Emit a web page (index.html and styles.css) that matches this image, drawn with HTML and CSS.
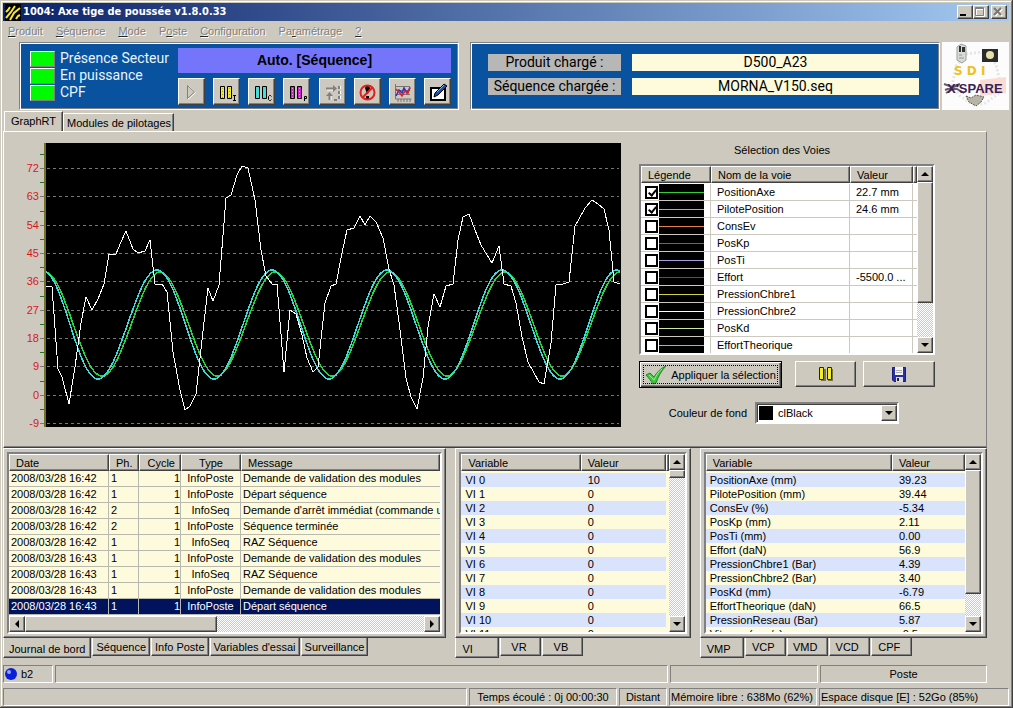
FILE: index.html
```html
<!DOCTYPE html>
<html lang="fr">
<head>
  <meta charset="UTF-8" />
  <meta name="viewport" content="width=device-width, initial-scale=1.0" />
  <title>1004: Axe tige de poussée v1.8.0.33</title>
  <link rel="stylesheet" href="styles.css">
</head>
<body>
<div class="window">

  <!-- title bar -->
  <header class="titlebar">
    <svg class="app-icon" width="16" height="17" viewBox="0 0 16 17">
      <rect width="16" height="17" fill="#000"/>
      <path d="M1 8L3 6 5 3M1 14L6 8 10 2M5 16L9 9 15 4M11 15L13 12 15 11" stroke="#f5e62a" stroke-width="2" fill="none"/>
    </svg>
    <h1>1004: Axe tige de poussée v1.8.0.33</h1>
    <button class="win-btn" aria-label="Réduire"><svg width="12" height="10"><path d="M2 8h6" stroke="#000" stroke-width="2"/></svg></button>
    <button class="win-btn" aria-label="Agrandir"><svg width="12" height="10"><path d="M2.500 1.500h8v8h-8zM2 2.500h9" stroke="#fff" fill="none"/><path d="M1.500 .5h8v8h-8zM1 1.500h9" stroke="#808080" fill="none"/></svg></button>
    <button class="win-btn close" aria-label="Fermer"><svg width="12" height="10"><path d="M3 2l7 7M10 2l-7 7" stroke="#fff" stroke-width="2"/><path d="M2 1l7 7M9 1l-7 7" stroke="#777" stroke-width="2"/></svg></button>
  </header>

  <nav class="menu">
    <a href="#"><u>P</u>roduit</a>
    <a href="#"><u>S</u>équence</a>
    <a href="#"><u>M</u>ode</a>
    <a href="#">P<u>o</u>ste</a>
    <a href="#"><u>C</u>onfiguration</a>
    <a href="#">Pa<u>r</u>amétrage</a>
    <a href="#"><u>?</u></a>
  </nav>

  <!-- state + toolbar -->
  <section class="top">
    <div class="blue state">
      <ul class="leds">
        <li>Présence Secteur</li>
        <li>En puissance</li>
        <li>CPF</li>
      </ul>
      <div class="control">
        <div class="banner">Auto. [Séquence]</div>
        <div class="toolbar">
          <button aria-label="Démarrer"><svg width="24" height="24"><path d="M9.500 6v13l7-6.500z" fill="none" stroke="#fff"/><path d="M8.500 5.500v13l7-6.500z" fill="#cdc9be" stroke="#808080"/></svg></button>
          <button aria-label="Pause immédiate"><svg width="24" height="24"><path d="M6.500 6.500h4v12h-4zM13.500 6.500h4v12h-4z" fill="#f2ec25" stroke="#000"/><path d="M8.500 8v10M15.500 8v10" stroke="#a9a422" stroke-dasharray="1 2"/><path d="M19 15.500h3M20.500 15.500v5M19 20.500h3" stroke="#000" fill="none"/></svg></button>
          <button aria-label="Pause cycle"><svg width="24" height="24"><path d="M6.500 6.500h4v12h-4zM13.500 6.500h4v12h-4z" fill="#3fe0dc" stroke="#000"/><path d="M22.500 16.500l-1-1h-1l-1 1v3l1 1h1l1-1" stroke="#000" fill="none"/></svg></button>
          <button aria-label="Pause phase"><svg width="24" height="24"><path d="M6.500 6.500h4v12h-4zM13.500 6.500h4v12h-4z" fill="#d41fd0" stroke="#000"/><path d="M8.500 8v10M15.500 8v10" stroke="#f59af0" stroke-dasharray="1 2"/><path d="M20.500 21v-4.500h2v2h-2" stroke="#000" fill="none"/></svg></button>
          <button aria-label="Pas à pas"><svg width="24" height="24"><path d="M7 9.500h6M10.500 15v5" stroke="#fff" stroke-width="2"/><path d="M20 6v15" stroke="#fff" stroke-width="2" stroke-dasharray="3 2"/><path d="M6 8.500h7M9.500 15v5" stroke="#808080" stroke-width="2"/><path d="M19 6v15M14 20h5" stroke="#808080" stroke-width="2" stroke-dasharray="3 2"/><path d="M13 5l4 3.500-4 3.500zM6 16l3.500-4 3.500 4z" fill="#808080"/></svg></button>
          <button aria-label="Arrêt"><svg width="24" height="24"><path d="M11 6h3l1 2-2 6h-1l-2-6z" fill="#000"/><path d="M11 16h3v3h-3z" fill="#000"/><circle cx="12.500" cy="12.500" r="7" fill="none" stroke="#e2201c" stroke-width="2"/><path d="M8 17l9-9" stroke="#e2201c" stroke-width="2"/></svg></button>
          <button aria-label="Courbes"><svg width="24" height="24"><path d="M5.500 4v15h16M5 6.500h15M5 10.500h15M5 14.500h15" fill="none" stroke="#777"/><path d="M8 19v3M11 19v3M14 19v3M17 19v3M20 19v3" stroke="#777"/><path d="M6 16l3-6 3 3 2-5 3 5 3-5" fill="none" stroke="#2233cc" stroke-width="1.500"/><path d="M6 9l3 3 3 4 3-5 3 2 2-6" fill="none" stroke="#d9232b" stroke-width="1.500"/></svg></button>
          <button aria-label="Éditer"><svg width="24" height="24"><path d="M6 8h14v12H6z" fill="#fff" stroke="#000" stroke-width="2"/><path d="M9 17l1-4 9-9 3 2-9 9z" fill="#1650b0" stroke="#000"/><path d="M12 12l7-7" stroke="#7fb2ee"/></svg></button>
        </div>
      </div>
    </div>

    <dl class="blue loaded">
      <dt>Produit chargé :</dt><dd>D500_A23</dd>
      <dt>Séquence chargée :</dt><dd>MORNA_V150.seq</dd>
    </dl>

    <svg class="logo" width="67" height="68" viewBox="0 0 67 68">
      <rect width="67" height="68" fill="#fcfcfc"/>
      <path d="M10 44L14 24 24 12 40 10 54 22 58 40 56 52 42 62 30 62 18 54z" fill="none" stroke="#e6e6e6" stroke-width="3" stroke-dasharray="2 2"/>
      <path d="M15 5l4-3 5 2v14l-4 3-5-3z" fill="#d8dcd6" stroke="#9aa098"/>
      <path d="M17 4h2v6h-2zM20 5h3v5h-3z" fill="#333"/>
      <path d="M17 13h3M17 16h5" stroke="#8c9a88"/>
      <rect x="40" y="7" width="16" height="13" fill="#2a2a2a"/>
      <circle cx="48" cy="13" r="4" fill="#e8dfa9"/>
      <text x="12" y="33" class="logo-sdi">S D I</text>
      <path d="M38 38l26-3v16l-26 3z" fill="#f9dcd3"/>
      <path d="M2 42l8 3 8-3M3 48l14-5M4 51l9-5 9 5" stroke="#6a5c68" stroke-width="2" fill="none"/>
      <text x="5" y="51" class="logo-name">X'SPARE</text>
      <path d="M24 54l5 2 5-3 8 2-3 5-5 4-7-4z" fill="#b9b5a6" stroke="#5a574e" stroke-dasharray="2 1"/>
    </svg>
  </section>

  <main class="main">
    <div class="tabs upper" role="tablist">
      <button class="tab active" role="tab">GraphRT</button>
      <button class="tab" role="tab">Modules de pilotages</button>
    </div>

    <section class="page">
      <svg class="chart" viewBox="20 143 601 284">
        <g class="labels">
          <text x="39" y="172">72</text>
          <text x="39" y="200">63</text>
          <text x="39" y="229">54</text>
          <text x="39" y="257">45</text>
          <text x="39" y="285">36</text>
          <text x="39" y="314">27</text>
          <text x="39" y="342">18</text>
          <text x="39" y="370">9</text>
          <text x="39" y="399">0</text>
          <text x="39" y="427">-9</text>
        </g>
        <path d="M40 168.500h4M40 196.500h4M40 225.500h4M40 253.500h4M40 281.500h4M40 310.500h4M40 338.500h4M40 366.500h4M40 395.500h4M40 423.500h4" stroke="#777"/>
        <path d="M40 154.500h4M40 182.500h4M40 211.500h4M40 239.500h4M40 267.500h4M40 296.500h4M40 324.500h4M40 352.500h4M40 381.500h4M40 409.500h4" stroke="#1c7a1c"/>
        <rect x="44" y="143" width="2" height="284" fill="#74741c"/>
        <!-- plot area, clips the curves -->
        <svg x="46" y="143" width="575" height="284" viewBox="46 143 575 284">
          <rect x="46" y="143" width="575" height="284" fill="#000"/>
          <path class="grid" d="M47 168.500H619M47 196.500H619M47 225.500H619M47 253.500H619M47 281.500H619M47 310.500H619M47 338.500H619M47 366.500H619M47 395.500H619M47 423.500H619"/>
          <path class="curve wave" stroke="#22d83a" d="M45 272C65 272 81 376 102 376S140 272 160 272 197 376 217 376 255 272 275 272 312 376 332 376 370 272 390 272 427 376 447 376 485 272 505 272 542 376 562 376 600 272 620 272"/>
          <path class="curve wave" stroke="#3fd8dc" d="M42 270C63 270 77 379 98 379S136 270 157 270 193 379 214 379 251 270 272 270 308 379 329 379 366 270 387 270 424 379 445 379 481 270 502 270 539 379 560 379 596 270 617 270L620 271"/>
          <polyline class="curve" stroke="#fff" points="46,286 52,287 58,369 62,377 69,404 75,367 81,323 86,297 92,310 98,299 104,284 109,254 116,254 121,242 126,231 133,249 138,253 145,251 150,240 155,284 162,284 167,292 173,352 180,390 185,410 190,406 196,394 202,340 208,288 213,301 219,285 226,198 231,195 237,175 242,166 248,168 255,200 261,250 266,276 272,284 277,284 284,372 290,310 296,314 302,335 307,358 313,372 318,367 325,303 331,286 336,284 342,253 347,230 354,228 360,216 365,225 370,216 376,222 383,238 389,269 394,285 399,322 406,378 411,397 417,409 423,378 428,327 434,294 440,307 446,286 453,284 458,240 463,217 469,214 475,230 481,245 487,255 492,263 499,246 504,284 511,286 516,303 522,337 528,362 534,373 539,382 544,384 551,343 556,285 563,284 569,282 575,226 579,219 585,208 592,200 598,204 604,209 609,230 614,282 620,284"/>
        </svg>
      </svg>

      <div class="channels">
        <h2>Sélection des Voies</h2>
        <div class="list channel-list">
          <div class="view">
            <table class="voies">
              <colgroup><col class="w70"><col><col class="w63"><col class="w4"></colgroup>
              <thead><tr><th>Légende</th><th>Nom de la voie</th><th>Valeur</th><th></th></tr></thead>
              <tbody>
                <tr><td><input type="checkbox" aria-label="PositionAxe" checked><i class="line c1"></i></td><td>PositionAxe</td><td>22.7 mm</td><td></td></tr>
                <tr><td><input type="checkbox" aria-label="PilotePosition" checked><i class="line c2"></i></td><td>PilotePosition</td><td>24.6 mm</td><td></td></tr>
                <tr><td><input type="checkbox" aria-label="ConsEv"><i class="line c3"></i></td><td>ConsEv</td><td></td><td></td></tr>
                <tr><td><input type="checkbox" aria-label="PosKp"><i class="line c4"></i></td><td>PosKp</td><td></td><td></td></tr>
                <tr><td><input type="checkbox" aria-label="PosTi"><i class="line c5"></i></td><td>PosTi</td><td></td><td></td></tr>
                <tr><td><input type="checkbox" aria-label="Effort"><i class="line c6"></i></td><td>Effort</td><td>-5500.0 ...</td><td></td></tr>
                <tr><td><input type="checkbox" aria-label="PressionChbre1"><i class="line c7"></i></td><td>PressionChbre1</td><td></td><td></td></tr>
                <tr><td><input type="checkbox" aria-label="PressionChbre2"><i class="line c8"></i></td><td>PressionChbre2</td><td></td><td></td></tr>
                <tr><td><input type="checkbox" aria-label="PosKd"><i class="line c9"></i></td><td>PosKd</td><td></td><td></td></tr>
                <tr><td><input type="checkbox" aria-label="EffortTheorique"><i class="line c2"></i></td><td>EffortTheorique</td><td></td><td></td></tr>
              </tbody>
            </table>
          </div>
          <div class="vscroll">
            <button class="arrow up" aria-label="Haut"></button>
            <div class="thumb long"></div>
            <button class="arrow down" aria-label="Bas"></button>
          </div>
        </div>

        <div class="actions">
          <button class="apply">
            <svg width="22" height="20" viewBox="0 0 22 20"><path d="M1 10l4-2 4 4C12 7 16 3 21 1 16 6 13 12 11 18l-3 1C6 16 4 13 1 10z" fill="#3cc63c" stroke="#1f8a26"/><path d="M4 10l5 5C12 9 14 6 17 4" fill="none" stroke="#9af08a"/></svg>
            <span>Appliquer la sélection</span>
          </button>
          <button class="pause" aria-label="Pause"><svg width="14" height="16"><path d="M2 3h5v12H2zM9 3h5v12H9z" fill="#77745a"/><path d="M.5 1.500h4v12h-4zM8.500 1.500h4v12h-4z" fill="#f4ee22" stroke="#222"/></svg></button>
          <button class="save" aria-label="Enregistrer"><svg width="14" height="15" viewBox="0 0 14 15"><path d="M.5.5h13v14H2L.5 13z" fill="#2a2ea8" stroke="#1b1d78"/><path d="M3 0h8v8H3z" fill="#f2f2f2"/><path d="M4 3.500h6M4 5.500h6" stroke="#aaa"/><path d="M4 10h7v5H4z" fill="#ddd"/><path d="M5 11h2v3H5z" fill="#222"/></svg></button>
        </div>

        <div class="backcolor">
          <label for="fond">Couleur de fond</label>
          <div class="combo">
            <i class="swatch"></i>
            <select id="fond"><option>clBlack</option><option>clWhite</option></select>
            <i class="arrow down"></i>
          </div>
        </div>
      </div>
    </section>

    <section class="docks">
      <div class="dock journal">
        <div class="frame">
          <div class="list log-list">
            <div class="view">
              <table class="log">
                <colgroup><col class="w100"><col class="w30"><col class="w42"><col class="w60"><col></colgroup>
                <thead><tr><th>Date</th><th>Ph.</th><th>Cycle</th><th>Type</th><th>Message</th></tr></thead>
                <tbody>
                  <tr><td>2008/03/28 16:42</td><td>1</td><td>1</td><td>InfoPoste</td><td>Demande de validation des modules</td></tr>
                  <tr><td>2008/03/28 16:42</td><td>1</td><td>1</td><td>InfoPoste</td><td>Départ séquence</td></tr>
                  <tr><td>2008/03/28 16:42</td><td>2</td><td>1</td><td>InfoSeq</td><td>Demande d'arrêt immédiat (commande utili</td></tr>
                  <tr><td>2008/03/28 16:42</td><td>2</td><td>1</td><td>InfoPoste</td><td>Séquence terminée</td></tr>
                  <tr><td>2008/03/28 16:42</td><td>1</td><td>1</td><td>InfoSeq</td><td>RAZ Séquence</td></tr>
                  <tr><td>2008/03/28 16:43</td><td>1</td><td>1</td><td>InfoPoste</td><td>Demande de validation des modules</td></tr>
                  <tr><td>2008/03/28 16:43</td><td>1</td><td>1</td><td>InfoSeq</td><td>RAZ Séquence</td></tr>
                  <tr><td>2008/03/28 16:43</td><td>1</td><td>1</td><td>InfoPoste</td><td>Demande de validation des modules</td></tr>
                  <tr class="selected"><td>2008/03/28 16:43</td><td>1</td><td>1</td><td>InfoPoste</td><td>Départ séquence</td></tr>
                </tbody>
              </table>
            </div>
            <div class="hscroll">
              <button class="arrow left" aria-label="Gauche"></button>
              <div class="thumb"></div>
              <button class="arrow right" aria-label="Droite"></button>
            </div>
          </div>
        </div>
        <div class="tabs lower" role="tablist">
          <button class="tab active" role="tab">Journal de bord</button>
          <button class="tab" role="tab">Séquence</button>
          <button class="tab" role="tab">Info Poste</button>
          <button class="tab" role="tab">Variables d'essai</button>
          <button class="tab" role="tab">Surveillance</button>
        </div>
      </div>

      <div class="dock vars">
        <div class="frame">
          <div class="list var-list">
            <div class="view">
              <table class="striped">
                <colgroup><col><col class="w85"><col class="w3"></colgroup>
                <thead><tr><th>Variable</th><th>Valeur</th><th></th></tr></thead>
                <tbody>
                  <tr><td>VI 0</td><td>10</td><td></td></tr>
                  <tr><td>VI 1</td><td>0</td><td></td></tr>
                  <tr><td>VI 2</td><td>0</td><td></td></tr>
                  <tr><td>VI 3</td><td>0</td><td></td></tr>
                  <tr><td>VI 4</td><td>0</td><td></td></tr>
                  <tr><td>VI 5</td><td>0</td><td></td></tr>
                  <tr><td>VI 6</td><td>0</td><td></td></tr>
                  <tr><td>VI 7</td><td>0</td><td></td></tr>
                  <tr><td>VI 8</td><td>0</td><td></td></tr>
                  <tr><td>VI 9</td><td>0</td><td></td></tr>
                  <tr><td>VI 10</td><td>0</td><td></td></tr>
                  <tr><td>VI 11</td><td>0</td><td></td></tr>
                </tbody>
              </table>
            </div>
            <div class="vscroll">
              <button class="arrow up" aria-label="Haut"></button>
              <div class="thumb short"></div>
              <button class="arrow down" aria-label="Bas"></button>
            </div>
          </div>
        </div>
        <div class="tabs lower wide" role="tablist">
          <button class="tab active" role="tab">VI</button>
          <button class="tab" role="tab">VR</button>
          <button class="tab" role="tab">VB</button>
        </div>
      </div>

      <div class="dock measures">
        <div class="frame">
          <div class="list var-list">
            <div class="view">
              <table class="striped">
                <colgroup><col><col class="w73"></colgroup>
                <thead><tr><th>Variable</th><th>Valeur</th></tr></thead>
                <tbody>
                  <tr><td>PositionAxe (mm)</td><td>39.23</td></tr>
                  <tr><td>PilotePosition (mm)</td><td>39.44</td></tr>
                  <tr><td>ConsEv (%)</td><td>-5.34</td></tr>
                  <tr><td>PosKp (mm)</td><td>2.11</td></tr>
                  <tr><td>PosTi (mm)</td><td>0.00</td></tr>
                  <tr><td>Effort (daN)</td><td>56.9</td></tr>
                  <tr><td>PressionChbre1 (Bar)</td><td>4.39</td></tr>
                  <tr><td>PressionChbre2 (Bar)</td><td>3.40</td></tr>
                  <tr><td>PosKd (mm)</td><td>-6.79</td></tr>
                  <tr><td>EffortTheorique (daN)</td><td>66.5</td></tr>
                  <tr><td>PressionReseau (Bar)</td><td>5.87</td></tr>
                  <tr><td>Vitesse (mm/s)</td><td>-0.5</td></tr>
                </tbody>
              </table>
            </div>
            <div class="vscroll">
              <button class="arrow up" aria-label="Haut"></button>
              <div class="thumb long"></div>
              <button class="arrow down" aria-label="Bas"></button>
            </div>
          </div>
        </div>
        <div class="tabs lower wide" role="tablist">
          <button class="tab active" role="tab">VMP</button>
          <button class="tab" role="tab">VCP</button>
          <button class="tab" role="tab">VMD</button>
          <button class="tab" role="tab">VCD</button>
          <button class="tab" role="tab">CPF</button>
        </div>
      </div>
    </section>
  </main>

  <!-- status bars -->
  <div class="status user">
    <div><svg width="12" height="12" viewBox="0 0 12 12"><circle cx="6" cy="6" r="6" fill="#0a1fd8"/><circle cx="4" cy="4" r="2" fill="#8fa4ff"/></svg>b2</div>
    <div></div>
    <div></div>
    <div class="center">Poste</div>
  </div>
  <footer class="status system">
    <div></div>
    <div class="center">Temps écoulé : 0j 00:00:30</div>
    <div class="center">Distant</div>
    <div>Mémoire libre : 638Mo (62%)</div>
    <div>Espace disque [E] : 52Go (85%)</div>
  </footer>
</div>
</body>
</html>
```
FILE: styles.css
```css
* {
  box-sizing: border-box;
}

body {
  margin: 0;
  background: #cdc9be;
  font-family: "Liberation Sans", Arial, sans-serif;
  font-size: 11px;
  line-height: 14px;
  color: #000;
}

button, select, input {
  font: inherit;
  color: inherit;
  margin: 0;
  padding: 0;
}

h1, h2, ul, dl, dd {
  margin: 0;
  padding: 0;
}

svg {
  display: block;
}

.window {
  min-height: 100vh;
  padding: 3px 4px 2px 3px;
  background: #cdc9be;
  box-shadow: inset -1px -1px #404040, inset 1px 1px #cdc9be, inset -2px -2px #808080, inset 2px 2px #fff;
}

/* title bar */
.titlebar {
  display: flex;
  align-items: center;
  height: 18px;
  padding: 0 2px;
  background: linear-gradient(to right, #0a2168, #a3c9f1);
}

.titlebar h1 {
  flex: 1;
  margin-left: 2px;
  font-family: "DejaVu Sans Condensed", "DejaVu Sans", sans-serif;
  font-size: 11px;
  color: #fff;
}

.win-btn {
  width: 16px;
  height: 14px;
  border: 1px solid;
  border-color: #fff #404040 #404040 #fff;
  background: #cdc9be;
  box-shadow: inset -1px -1px #808080;
}

.close {
  margin-left: 2px;
}

/* menu, every entry is disabled */
.menu {
  display: flex;
  gap: 13px;
  height: 21px;
  padding: 3px 5px;
}

.menu a {
  color: #808080;
  text-decoration: none;
  text-shadow: 1px 1px #fff;
}

.menu u {
  text-decoration-color: #222;
}

/* header */
.top {
  display: grid;
  grid-template-columns: minmax(0, 440fr) minmax(0, 483fr) 67px;
  padding-left: 16px;
  height: 68px;
}

.blue {
  background: #0852a0;
  border: 1px solid;
  border-color: #808080 #fff #fff #808080;
  box-shadow: inset 1px 1px #fff, inset -1px -1px #808080;
}

.state {
  display: flex;
  padding: 5px 7px 4px 10px;
}

.leds {
  width: 148px;
  list-style: none;
  font-family: Roboto, sans-serif;
  font-size: 14px;
  line-height: 17px;
  color: #e8f4ff;
}

.leds li {
  display: flex;
  align-items: center;
  gap: 5px;
}

.leds li::before {
  content: "";
  width: 23px;
  height: 14px;
  background: #00fb00;
  border: 1px solid;
  border-color: #fff #808080 #808080 #fff;
}

.leds li:first-child {
  margin-top: 2px;
}

.control {
  flex: 1;
}

.banner {
  background: #7575fb;
  font-size: 14px;
  font-weight: bold;
  line-height: 25px;
  text-align: center;
}

.toolbar {
  display: flex;
  justify-content: space-between;
  margin-top: 5px;
}

.toolbar button {
  width: 27px;
  height: 27px;
  border: 1px solid;
  border-color: #fff #404040 #404040 #fff;
  background: #cdc9be;
  box-shadow: inset -1px -1px #808080;
}

.loaded {
  display: grid;
  grid-template-columns: 133px 1fr;
  gap: 7px 11px;
  align-content: start;
  margin: 0 2px 0 11px;
  padding: 11px 20px 0 17px;
  font-family: Roboto, sans-serif;
  font-size: 14px;
  line-height: 17px;
  text-align: center;
}

.loaded dt {
  background: #b7b7b7;
}

.loaded dd {
  background: #fdfbdb;
}

.logo-sdi {
  font: bold 12px "DejaVu Sans", sans-serif;
  fill: #ecc21c;
}

.logo-name {
  font: bold 13px "Liberation Sans", sans-serif;
  fill: #3a2058;
}

/* tabs */
.main {
  padding-right: 22px;
}

.tabs {
  display: flex;
}

.tab {
  border: 1px solid;
  background: #cdc9be;
}

.upper {
  align-items: flex-end;
  height: 21px;
  padding-left: 1px;
}

.upper .tab {
  height: 18px;
  padding: 0 2px 0 3px;
  border-color: #fff #404040 transparent #fff;
  border-bottom: 0;
  box-shadow: inset -1px 0 #808080;
}

.upper .active {
  height: 20px;
  padding: 0 6px 2px 6px;
}

.page {
  display: flex;
  padding: 11px 51px 20px 16px;
  border: 1px solid;
  border-color: #fff #808080 #404040 #fff;
  box-shadow: inset 0 -1px #808080;
}

.chart {
  flex: 1;
  min-width: 0;
  align-self: flex-start;
  overflow: visible;
}

.labels {
  font-size: 11px;
  fill: #d81818;
  text-anchor: end;
}

.grid {
  stroke: #777;
  stroke-dasharray: 3 3;
}

.curve {
  fill: none;
  shape-rendering: crispEdges;
}

.wave {
  stroke-width: 1.5;
}

.channels {
  width: 296px;
  margin-left: 18px;
}

.channels h2 {
  font-size: 11px;
  font-weight: normal;
  text-align: center;
  padding-right: 10px;
  margin-bottom: 7px;
}

/* lists */
.list {
  display: flex;
  border: 2px solid;
  border-color: #808080 #fff #fff #808080;
  background: #fff;
}

.view {
  flex: 1;
  min-width: 0;
  overflow: hidden;
}

table {
  width: 100%;
  table-layout: fixed;
  border-collapse: separate;
  border-spacing: 0;
}

th, td {
  overflow: hidden;
  white-space: nowrap;
  text-align: left;
  font-weight: normal;
}

th {
  height: 17px;
  padding: 0 6px;
  background: #cdc9be;
  border: 1px solid;
  border-color: #fff #404040 #404040 #fff;
  box-shadow: inset -1px -1px #808080;
}

.w3 { width: 3px; }
.w4 { width: 4px; }
.w30 { width: 30px; }
.w42 { width: 42px; }
.w60 { width: 60px; }
.w63 { width: 63px; }
.w70 { width: 70px; }
.w73 { width: 73px; }
.w85 { width: 85px; }
.w100 { width: 100px; }

.channel-list {
  height: 191px;
}

.voies td {
  height: 17px;
  padding: 0 6px;
  border-right: 1px solid #cdc9be;
  border-bottom: 1px solid #cdc9be;
}

.voies td:first-child {
  display: flex;
  padding: 0 6px 0 4px;
}

.voies td:last-child {
  border-right: 0;
  padding: 0;
}

.voies th:last-child {
  padding: 0;
}

.voies tbody::before {
  content: "";
  display: block;
  height: 1px;
}

.voies input {
  appearance: none;
  position: relative;
  width: 13px;
  height: 13px;
  margin: 2px 1px 0 0;
  border: 2px solid #000;
  background: #fff;
}

.voies input:checked::after {
  content: "";
  position: absolute;
  left: 3px;
  top: 0;
  width: 3px;
  height: 6px;
  border: solid #000;
  border-width: 0 2px 2px 0;
  transform: rotate(40deg);
}

.line {
  flex: 1;
  height: 17px;
  padding-top: 8px;
  background: #000;
}

.line::before {
  content: "";
  display: block;
  height: 1px;
  background: currentColor;
}

.c1 { color: #30d030; }
.c2 { color: #4fd8da; }
.c3 { color: #e08048; }
.c4 { color: #c824c8; }
.c5 { color: #a6a0e0; }
.c6 { color: #d02020; }
.c7 { color: #d2d240; }
.c8 { color: #fff; }
.c9 { color: #c9e8a0; }

/* scrollbars */
.vscroll, .hscroll {
  display: flex;
  flex: none;
  background: repeating-conic-gradient(#fff 0 25%, #cdc9be 0 50%) 0 0 / 2px 2px;
}

.vscroll {
  flex-direction: column;
  width: 16px;
}

.hscroll {
  height: 16px;
}

.arrow, .thumb {
  border: 1px solid;
  border-color: #fff #404040 #404040 #fff;
  background: #cdc9be;
  box-shadow: inset -1px -1px #808080;
}

.arrow {
  display: flex;
  align-items: center;
  justify-content: center;
  flex: none;
  width: 16px;
  height: 16px;
}

.arrow::before {
  content: "";
  border: 4px solid transparent;
}

.up::before { border-top: 0; border-bottom-color: #000; }
.down::before { border-bottom: 0; border-top-color: #000; }
.left::before { border-left: 0; border-right-color: #000; }
.right::before { border-right: 0; border-left-color: #000; }

.down, .right {
  margin: auto 0 0 auto;
}

.long { height: 121px; }
.short { height: 8px; }

.measures .long { height: 124px; }

.hscroll .thumb {
  width: 192px;
}

/* buttons under the channel list */
.actions {
  display: flex;
  height: 27px;
  margin-top: 6px;
}

.actions button {
  display: flex;
  align-items: center;
  justify-content: center;
  height: 26px;
  border: 1px solid;
  border-color: #fff #404040 #404040 #fff;
  background: #cdc9be;
  box-shadow: inset -1px -1px #808080;
}

.actions .apply {
  width: 143px;
  height: 27px;
  gap: 4px;
  border: 1px solid #000;
  box-shadow: inset 1px 1px #fff, inset -1px -1px #404040, inset -2px -2px #808080;
  outline: 1px dotted #000;
  outline-offset: -5px;
}

.actions .pause {
  width: 61px;
  margin: 0 7px 0 13px;
}

.actions .save {
  flex: 1;
}

.backcolor {
  display: flex;
  align-items: center;
  justify-content: flex-end;
  gap: 8px;
  margin: 14px 36px 0 0;
}

.combo {
  position: relative;
  width: 144px;
  height: 22px;
  border: 2px solid;
  border-color: #808080 #fff #fff #808080;
  box-shadow: inset 1px 1px #404040;
  background: #fff;
}

.combo select {
  appearance: none;
  width: 100%;
  height: 18px;
  padding-left: 21px;
  border: 0;
  background: transparent;
}

.combo .arrow {
  position: absolute;
  top: 1px;
  right: 0;
  pointer-events: none;
}

.swatch {
  position: absolute;
  left: 2px;
  top: 2px;
  width: 14px;
  height: 14px;
  background: #000;
}

/* lower panels */
.docks {
  display: flex;
  gap: 9px;
}

.journal { flex: 443 1 0; }
.vars { flex: 235 1 0; }
.measures { flex: 287 1 0; }

.dock {
  min-width: 0;
}

.frame {
  padding: 3px;
  border: 1px solid;
  border-color: #fff #404040 #404040 #fff;
  box-shadow: inset -1px -1px #808080;
}

.frame .list {
  height: 182px;
  background: #fdfbdb;
}

.log-list {
  flex-direction: column;
}

.log td {
  height: 16px;
  padding: 0 2px;
  line-height: 15px;
  border-right: 1px solid #b9b9b0;
  border-bottom: 1px solid #b9b9b0;
}

.log td:last-child {
  padding-right: 0;
  border-right: 0;
}

.log td:nth-child(3) {
  text-align: right;
  padding-right: 0;
}

.log th:nth-child(3) {
  text-align: right;
  padding-right: 5px;
}

.log th:nth-child(4),
.log td:nth-child(4) {
  text-align: center;
}

.log .selected td {
  background: #00135c;
  color: #fff;
}

.striped td {
  height: 14px;
  padding: 0 4px;
}

.striped td + td {
  padding-left: 7px;
}

.striped td:empty, .striped th:empty {
  padding: 0;
}

.striped tr:nth-child(odd) td:not(:empty) {
  background: #d9e3fb;
}

.striped tbody::before {
  content: "";
  display: block;
  height: 2px;
}

.lower {
  align-items: flex-start;
  gap: 1px;
  height: 20px;
}

.lower .tab {
  height: 18px;
  padding: 0 3px;
  border-color: transparent #404040 #404040 #fff;
  border-top: 0;
  box-shadow: inset -1px -1px #808080;
}

.lower .active {
  height: 20px;
  padding: 2px 5px 0 5px;
}

.wide .tab {
  width: 41px;
  padding: 0 8px 0 4px;
}

.wide .active {
  width: 44px;
  text-align: left;
  padding: 2px 0 0 6px;
}

/* status bars */
.status {
  display: grid;
  gap: 2px;
  height: 18px;
}

.status div {
  display: flex;
  align-items: center;
  gap: 4px;
  padding: 0 1px;
  border: 1px solid;
  border-color: #808080 #fff #fff #808080;
  white-space: nowrap;
  overflow: hidden;
}

.status .center {
  justify-content: center;
}

.user {
  grid-template-columns: 50px 1fr 148px 167px;
  margin: 7px 22px 5px 0;
}

.system {
  grid-template-columns: 1fr 148px 48px 148px 190px;
}
```
